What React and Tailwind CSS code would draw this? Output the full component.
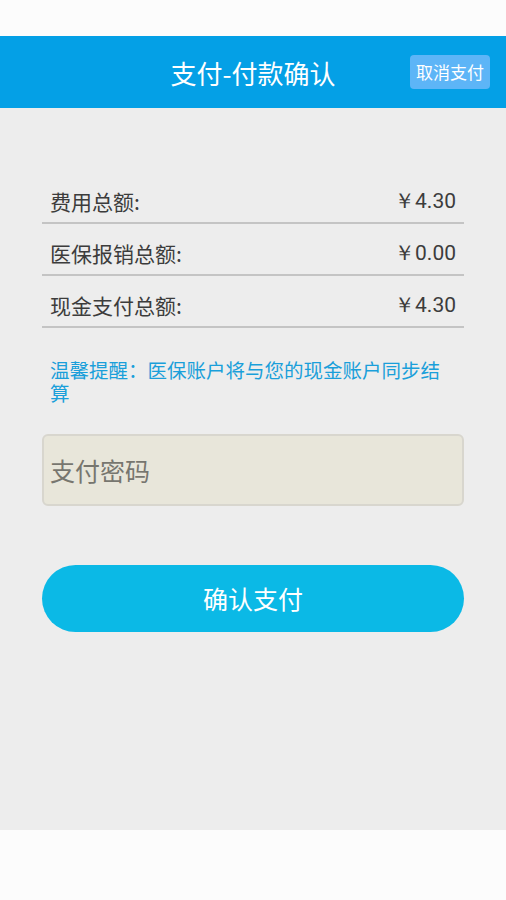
export default function App() {
  const rows = [
    { label: "费用总额:", value: "￥4.30" },
    { label: "医保报销总额:", value: "￥0.00" },
    { label: "现金支付总额:", value: "￥4.30" },
  ];

  return (
    <div
      className="flex h-[900px] w-[506px] flex-col bg-[#fcfcfc]"
      style={{ fontFamily: '"Noto Sans CJK SC", Roboto, sans-serif' }}
    >
      {/* status bar area */}
      <div className="h-[36px] bg-[#fcfcfc]" />

      {/* header */}
      <div className="relative flex h-[72px] items-center justify-center bg-[#04a0e6]">
        <h1 className="text-[26px] text-white">支付-付款确认</h1>
        <button className="absolute right-[16px] top-[19px] flex h-[34px] w-[80px] items-center justify-center rounded-[4px] bg-[#5db5f7] text-[17px] text-white">
          取消支付
        </button>
      </div>

      {/* body */}
      <div className="flex h-[722px] flex-col bg-[#ededed] px-[42px] pt-[64px]">
        {rows.map((r) => (
          <div
            key={r.label}
            className="flex h-[52px] items-center justify-between border-b-2 border-[#c4c4c4] px-[8px] pt-[10px] text-[21px] text-[#3c3c3c]"
          >
            <span>{r.label}</span>
            <span style={{ fontFamily: "Roboto, sans-serif" }}>{r.value}</span>
          </div>
        ))}

        <p className="mt-[30px] px-[8px] text-[19.5px] leading-[23px] text-[#1a9fda]">
          温馨提醒：医保账户将与您的现金账户同步结算
        </p>

        <input
          type="password"
          placeholder="支付密码"
          className="mt-[30px] h-[72px] w-full rounded-[6px] border-2 border-[#d8d6ce] bg-[#e8e6da] px-[6px] text-[25px] text-[#444] outline-none placeholder:text-[#77766f]"
        />

        <button className="mt-[59px] h-[67px] w-full rounded-full bg-[#0bb9e6] text-[25px] text-white">
          确认支付
        </button>
      </div>
    </div>
  );
}
